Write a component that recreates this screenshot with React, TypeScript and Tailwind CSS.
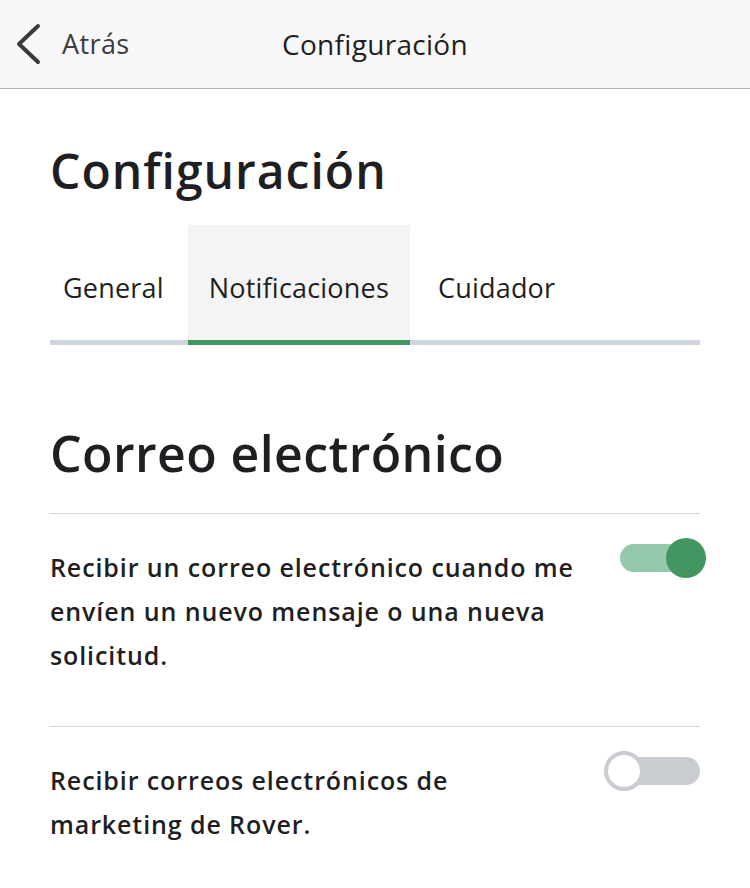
import React, { useState } from 'react';

const FONT = "font-['Open_Sans','Liberation_Sans',sans-serif]";

function Toggle({ on, onChange }: { on: boolean; onChange: () => void }) {
  return (
    <button onClick={onChange} className="relative w-[102px] h-[40px] shrink-0 flex items-center">
      <span
        className={`absolute left-[16px] right-[6px] h-[28px] rounded-full ${
          on ? 'bg-[#94c9ad]' : 'bg-[#c9ccd1]'
        }`}
      />
      {on ? (
        <span className="absolute right-0 w-[40px] h-[40px] rounded-full bg-[#43965f]" />
      ) : (
        <span className="absolute left-0 w-[40px] h-[40px] rounded-full bg-white border-[4px] border-[#c9ccd1]" />
      )}
    </button>
  );
}

function SettingRow({ text, on, onChange }: { text: React.ReactNode; on: boolean; onChange: () => void }) {
  return (
    <div className="border-t border-[#d4d7de] flex justify-between gap-4">
      <p className="pt-[31px] pb-[49px] text-[25px] leading-[44px] tracking-[0.9px] font-semibold text-[#1f1f23] max-w-[545px]">
        {text}
      </p>
      <div className="pt-[24px] -mr-[6px]">
        <Toggle on={on} onChange={onChange} />
      </div>
    </div>
  );
}

export default function App() {
  const [tab, setTab] = useState('Notificaciones');
  const [newMsg, setNewMsg] = useState(true);
  const [marketing, setMarketing] = useState(false);

  const tabs = [
    { name: 'General', pad: 'pl-[13px] pr-[24px]' },
    { name: 'Notificaciones', pad: 'px-[21px]' },
    { name: 'Cuidador', pad: 'pl-[28px] pr-[13px]' },
  ];

  return (
    <div className={`${FONT} w-[750px] h-[888px] bg-white text-[#1f1f23] overflow-hidden`}>
      <div className="h-[89px] bg-[#f8f8f8] border-b border-[#b3b3b3] flex items-center relative">
        <button className="flex items-center pl-[16px] text-[#3b3b3f]">
          <svg width="26" height="42" viewBox="0 0 26 42" fill="none">
            <path d="M22 3 L3 21 L22 39" stroke="#3b3b3f" strokeWidth="4" strokeLinecap="round" strokeLinejoin="round" />
          </svg>
          <span className="ml-[20px] text-[27px] tracking-[0.4px] font-normal">Atrás</span>
        </button>
        <h1 className="absolute left-0 right-0 text-center text-[28px] tracking-[0.3px] font-normal pointer-events-none">
          Configuración
        </h1>
      </div>

      <div className="px-[50px]">
        <h2 className="mt-[52px] text-[48px] tracking-[1px] font-semibold leading-[60px]">Configuración</h2>

        <div className="mt-[24px] flex border-b-[5px] border-[#d0d5dc]">
          {tabs.map((t) => (
            <button
              key={t.name}
              onClick={() => setTab(t.name)}
              className={`relative h-[115px] pt-[12px] text-[27px] tracking-[0.2px] ${t.pad} ${
                tab === t.name ? 'bg-[#f4f4f4]' : ''
              }`}
            >
              {t.name}
              {tab === t.name && <span className="absolute left-0 right-0 -bottom-[5px] h-[5px] bg-[#43965f]" />}
            </button>
          ))}
        </div>

        <h2 className="mt-[78px] text-[50px] tracking-[0.4px] font-semibold leading-[60px]">Correo electrónico</h2>

        <div className="mt-[30px]">
          <SettingRow
            text="Recibir un correo electrónico cuando me envíen un nuevo mensaje o una nueva solicitud."
            on={newMsg}
            onChange={() => setNewMsg(!newMsg)}
          />
          <SettingRow
            text="Recibir correos electrónicos de marketing de Rover."
            on={marketing}
            onChange={() => setMarketing(!marketing)}
          />
        </div>
      </div>
    </div>
  );
}
